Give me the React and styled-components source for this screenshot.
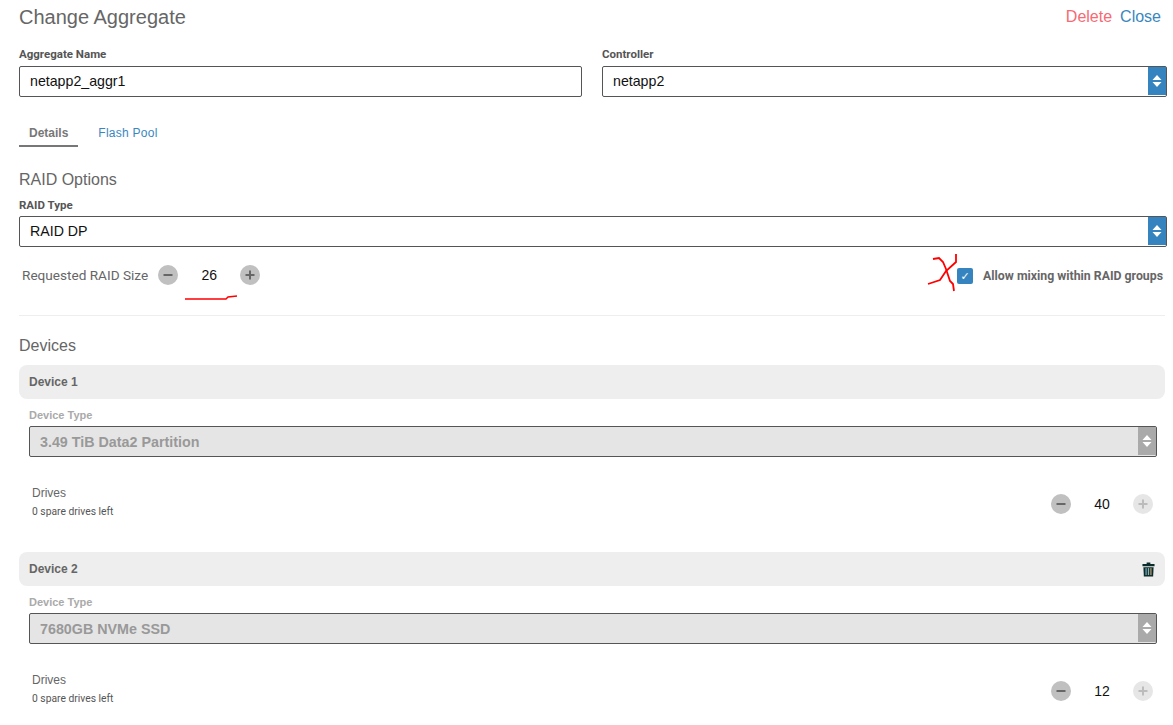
import React from 'react'
import styled, { createGlobalStyle } from 'styled-components'

const Global = createGlobalStyle`
  html, body {
    margin: 0;
    padding: 0;
    background: #fff;
    overflow: hidden;
  }
  body {
    font-family: "Liberation Sans", Arial, sans-serif;
    color: #222;
  }
`

const Arrows = ({ color = '#fff' }) => (
  <svg width="10" height="14" viewBox="0 0 10 14">
    <path d="M5 1 L9.5 6 H0.5 Z M0.5 8 H9.5 L5 13 Z" fill={color} />
  </svg>
)

const Select = ({ value, disabled }) => (
  <SelectBox $disabled={disabled}>
    {value}
    <ArrowCell $disabled={disabled}><Arrows /></ArrowCell>
  </SelectBox>
)

const Stepper = ({ value, plusDisabled }) => (
  <StepperWrap>
    <RoundButton>
      <svg width="10" height="10" viewBox="0 0 10 10"><rect x="0.5" y="4" width="9" height="2" fill="#666" /></svg>
    </RoundButton>
    <StepValue>{value}</StepValue>
    <RoundButton $disabled={plusDisabled}>
      <svg width="10" height="10" viewBox="0 0 10 10">
        <path d="M0.5 4 H4 V0.5 H6 V4 H9.5 V6 H6 V9.5 H4 V6 H0.5 Z" fill={plusDisabled ? '#bcbcbc' : '#666'} />
      </svg>
    </RoundButton>
  </StepperWrap>
)

const TrashIcon = () => (
  <svg width="13" height="15" viewBox="0 0 14 16">
    <path d="M5 0.5 H9 V2 H13.5 V4.5 H0.5 V2 H5 Z" fill="#0b2b2b" />
    <path d="M1.5 5.5 H12.5 L12 15.5 H2 Z" fill="#0b2b2b" />
    <rect x="3.7" y="6.5" width="1.4" height="7.5" fill="#6fa3b8" />
    <rect x="6.3" y="6.5" width="1.4" height="7.5" fill="#8fb0a8" />
    <rect x="8.9" y="6.5" width="1.4" height="7.5" fill="#b09a78" />
  </svg>
)

const Device = ({ name, type, drives, removable }) => (
  <DeviceBlock>
    <DeviceHeader>
      {name}
      {removable && <TrashIcon />}
    </DeviceHeader>
    <DeviceBody>
      <MutedLabel>Device Type</MutedLabel>
      <Select value={type} disabled />
      <DrivesRow>
        <DrivesText>
          <DrivesTitle>Drives</DrivesTitle>
          <SpareText>0 spare drives left</SpareText>
        </DrivesText>
        <Stepper value={drives} plusDisabled />
      </DrivesRow>
    </DeviceBody>
  </DeviceBlock>
)

const App = () => {
  return (
    <Page>
      <Global />
      <TopBar>
        <Title>Change Aggregate</Title>
        <Actions>
          <DeleteLink>Delete</DeleteLink>
          <CloseLink>Close</CloseLink>
        </Actions>
      </TopBar>

      <FormGrid>
        <div>
          <FieldLabel>Aggregate Name</FieldLabel>
          <TextInput>netapp2_aggr1</TextInput>
        </div>
        <div>
          <FieldLabel>Controller</FieldLabel>
          <Select value="netapp2" />
        </div>
      </FormGrid>

      <Tabs>
        <Tab $active>Details</Tab>
        <Tab>Flash Pool</Tab>
      </Tabs>

      <SectionTitle>RAID Options</SectionTitle>
      <RaidTypeLabel>RAID Type</RaidTypeLabel>
      <Select value="RAID DP" />

      <RaidRow>
        <RaidSize>
          <RaidLabel>Requested RAID Size</RaidLabel>
          <Stepper value="26" />
          <Underline width="60" height="12" viewBox="0 0 60 12">
            <path d="M2 8 L43 8 L45 6 L54 5" fill="none" stroke="#f00" strokeWidth="1.5" />
          </Underline>
        </RaidSize>
        <MixOption>
          <Scribble width="34" height="42" viewBox="0 0 34 42">
            <path d="M7 6 L13 5 L17 9 L20 16 L24 28 L27 31 L28 38" fill="none" stroke="#f00" strokeWidth="1.8" />
            <path d="M30 1 L30 9 L20 18 L14 27 L2 31" fill="none" stroke="#f00" strokeWidth="1.8" />
          </Scribble>
          <Checkbox>✓</Checkbox>
          <MixLabel>Allow mixing within RAID groups</MixLabel>
        </MixOption>
      </RaidRow>

      <Divider />

      <DevicesTitle>Devices</DevicesTitle>
      <Device name="Device 1" type="3.49 TiB Data2 Partition" drives="40" />
      <Device name="Device 2" type="7680GB NVMe SSD" drives="12" removable />
    </Page>
  )
}

export default App

const Page = styled.div`
  height: 725px;
  overflow: hidden;
  box-sizing: border-box;
  padding: 0 6px 0 19px;
`

const TopBar = styled.div`
  display: flex;
  align-items: center;
  justify-content: space-between;
  height: 35px;
  padding-right: 6px;
  margin-bottom: 12px;
`

const Title = styled.h1`
  margin: 0;
  font-size: 20px;
  font-weight: 400;
  color: #666;
`

const Actions = styled.div`
  display: flex;
  gap: 8px;
  padding-bottom: 2px;
  font-size: 16px;
`

const DeleteLink = styled.a`
  color: #f56a74;
`

const CloseLink = styled.a`
  color: #3a87c0;
`

const FormGrid = styled.div`
  display: grid;
  grid-template-columns: 563px 565px;
  column-gap: 20px;
`

const FieldLabel = styled.div`
  font-family: Roboto, sans-serif;
  font-size: 11.5px;
  font-weight: 700;
  line-height: 14px;
  height: 14px;
  margin-bottom: 5px;
  color: #555;
`

const RaidTypeLabel = styled(FieldLabel)`
  margin-bottom: 4px;
`

const TextInput = styled.div`
  box-sizing: border-box;
  height: 31px;
  line-height: 29px;
  padding-left: 10px;
  font-size: 14.2px;
  color: #111;
  border: 1px solid #555;
  border-radius: 2px;
`

const SelectBox = styled.div`
  position: relative;
  box-sizing: border-box;
  height: 31px;
  line-height: ${p => (p.$disabled ? '31px' : '29px')};
  padding-left: 10px;
  font-size: ${p => (p.$disabled ? '14.3px' : '14.2px')};
  font-weight: ${p => (p.$disabled ? 700 : 400)};
  color: ${p => (p.$disabled ? '#999' : '#111')};
  background: ${p => (p.$disabled ? '#e5e5e5' : '#fff')};
  border: 1px solid #555;
  border-radius: 2px;
`

const ArrowCell = styled.span`
  position: absolute;
  top: 0;
  right: 0;
  bottom: 1px;
  width: 18px;
  display: flex;
  align-items: center;
  justify-content: center;
  background: ${p => (p.$disabled ? '#aaa' : '#3584bf')};
`

const Tabs = styled.div`
  display: flex;
  margin-top: 20px;
  height: 30px;
  font-size: 12px;
`

const Tab = styled.div`
  box-sizing: border-box;
  padding: 9px 10px 0;
  margin-right: 10px;
  color: ${p => (p.$active ? '#777' : '#3a87c0')};
  font-weight: ${p => (p.$active ? 700 : 400)};
  letter-spacing: ${p => (p.$active ? 0 : '0.25px')};
  border-bottom: ${p => (p.$active ? '2px solid #777' : '0')};
`

const SectionTitle = styled.h2`
  margin: 23px 0 0;
  height: 28px;
  line-height: 20px;
  font-size: 16px;
  font-weight: 400;
  color: #666;
`

const DevicesTitle = styled(SectionTitle)`
  margin-top: 20px;
  height: 29px;
`

const RaidRow = styled.div`
  display: flex;
  align-items: center;
  justify-content: space-between;
  height: 28px;
  margin-top: 14px;
  padding: 0 4px 0 3px;
`

const RaidSize = styled.div`
  position: relative;
  display: flex;
  align-items: center;
  gap: 10px;
`

const RaidLabel = styled.span`
  font-family: Roboto, sans-serif;
  font-size: 13.6px;
  color: #666;
`

const Underline = styled.svg`
  position: absolute;
  left: 161px;
  top: 26px;
`

const MixOption = styled.div`
  position: relative;
  display: flex;
  align-items: center;
  gap: 10px;
  margin-top: 2px;
`

const Scribble = styled.svg`
  position: absolute;
  left: -31px;
  top: -15px;
`

const Checkbox = styled.span`
  display: flex;
  align-items: center;
  justify-content: center;
  width: 16px;
  height: 16px;
  border-radius: 2px;
  background: #3584bf;
  color: #fff;
  font-family: "DejaVu Sans", sans-serif;
  font-size: 11px;
`

const MixLabel = styled.span`
  font-family: Roboto, sans-serif;
  font-size: 12.3px;
  font-weight: 700;
  color: #666;
`

const Divider = styled.hr`
  margin: 26px 2px 0 0;
  border: 0;
  border-top: 1px solid #eee;
`

const DeviceBlock = styled.section`
  margin-right: 2px;
  margin-bottom: 22px;
`

const DeviceHeader = styled.div`
  display: flex;
  align-items: center;
  justify-content: space-between;
  box-sizing: border-box;
  height: 34px;
  padding: 0 10px;
  border-radius: 8px;
  background: #eee;
  font-size: 12px;
  font-weight: 700;
  color: #666;
`

const DeviceBody = styled.div`
  padding: 9px 8px 0 10px;
`

const MutedLabel = styled(RaidTypeLabel)`
  font-family: "Liberation Sans", Arial, sans-serif;
  font-size: 11px;
  color: #aaa;
`

const DrivesRow = styled.div`
  display: flex;
  align-items: center;
  justify-content: space-between;
  height: 53px;
  margin-top: 20px;
  padding: 0 4px 0 3px;
`

const DrivesText = styled.div`
  padding-bottom: 4px;
`

const DrivesTitle = styled.div`
  font-size: 12px;
  line-height: 16px;
  color: #666;
`

const SpareText = styled.div`
  margin-top: 5px;
  font-family: Roboto, sans-serif;
  font-size: 10.3px;
  line-height: 12px;
  color: #555;
`

const StepperWrap = styled.div`
  display: flex;
  align-items: center;
`

const RoundButton = styled.span`
  display: flex;
  align-items: center;
  justify-content: center;
  width: 20px;
  height: 20px;
  border-radius: 50%;
  background: ${p => (p.$disabled ? '#e6e6e6' : '#c0c0c0')};
`

const StepValue = styled.span`
  width: 62px;
  text-align: center;
  font-size: 14px;
  color: #111;
`
